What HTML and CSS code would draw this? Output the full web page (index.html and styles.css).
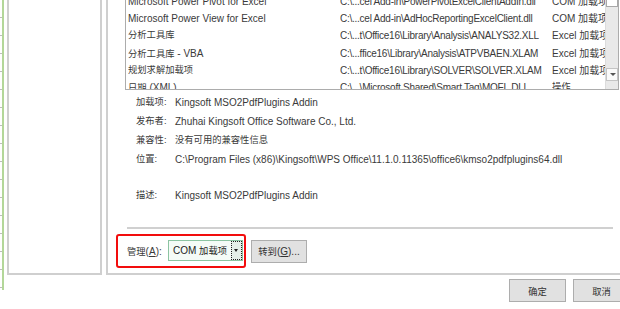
FILE: index.html
```html
<!DOCTYPE html>
<html lang="zh-CN">
<head>
    <meta charset="UTF-8">
    <title>加载项</title>
    <link rel="stylesheet" href="styles.css">
</head>
<body>
    <div class="window">
        <div class="ruler"></div>

        <div class="dialog">
            <div class="panels">
                <div class="left-panel"></div>

                <div class="main-panel">
                    <div class="list">
                        <div class="rows">
                            <div class="row"><span>Microsoft Power Pivot for Excel</span><span class="path">C:\...cel Add-in\PowerPivotExcelClientAddIn.dll</span><span>COM 加载项</span></div>
                            <div class="row"><span>Microsoft Power View for Excel</span><span class="path">C:\...cel Add-in\AdHocReportingExcelClient.dll</span><span>COM 加载项</span></div>
                            <div class="row"><span class="cjk">分析工具库</span><span class="path">C:\...t\Office16\Library\Analysis\ANALYS32.XLL</span><span>Excel 加载项</span></div>
                            <div class="row"><span><span class="cjk">分析工具库</span> - VBA</span><span class="path">C:\...ffice16\Library\Analysis\ATPVBAEN.XLAM</span><span>Excel 加载项</span></div>
                            <div class="row"><span class="cjk">规划求解加载项</span><span class="path">C:\...t\Office16\Library\SOLVER\SOLVER.XLAM</span><span>Excel 加载项</span></div>
                            <div class="row"><span><span class="cjk">日期</span> (XML)</span><span class="path">C:\...\Microsoft Shared\Smart Tag\MOFL.DLL</span><span class="cjk">操作</span></div>
                        </div>
                        <div class="scrollbar">
                            <div class="thumb"></div>
                            <div class="arrow-down"></div>
                        </div>
                    </div>

                    <div class="details">
                        <div class="detail"><span class="label cjk">加载项:</span><span>Kingsoft MSO2PdfPlugins Addin</span></div>
                        <div class="detail"><span class="label cjk">发布者:</span><span>Zhuhai Kingsoft Office Software Co., Ltd.</span></div>
                        <div class="detail"><span class="label cjk">兼容性:</span><span class="cjk">没有可用的兼容性信息</span></div>
                        <div class="detail"><span class="label cjk">位置:</span><span>C:\Program Files (x86)\Kingsoft\WPS Office\11.1.0.11365\office6\kmso2pdfplugins64.dll</span></div>
                        <div class="detail desc"><span class="label cjk">描述:</span><span>Kingsoft MSO2PdfPlugins Addin</span></div>
                    </div>

                    <div class="separator"></div>

                    <div class="manage-row">
                        <div class="highlight">
                            <span class="manage-label"><span class="cjk">管理</span>(<u>A</u>):</span>
                            <div class="combo">
                                <span class="combo-text">COM <span class="cjk">加载项</span></span>
                                <span class="combo-btn"></span>
                            </div>
                        </div>
                        <button class="btn go-btn"><span class="cjk">转到</span>(<u>G</u>)...</button>
                    </div>
                </div>
            </div>

            <div class="footer">
                <button class="btn cjk">确定</button>
                <button class="btn cjk">取消</button>
            </div>
        </div>
    </div>
</body>
</html>
```

FILE: styles.css
```css
body {
    margin: 0;
    width: 620px;
    height: 309px;
    overflow: hidden;
    background: #fff;
    font-family: "Liberation Sans", "Noto Sans CJK SC", sans-serif;
    font-size: 10px;
    color: #3a3a3a;
}

.cjk {
    font-size: 9.3px;
}

.window {
    display: flex;
    align-items: flex-start;
}

.ruler {
    width: 2px;
    height: 290px;
    border-right: 2px solid #b3d799;
    background: repeating-linear-gradient(to bottom, transparent 0 17px, #bdbdbd 17px 18px);
    flex-shrink: 0;
}

.dialog {
    margin-left: 3px;
    width: 613px;
    flex-shrink: 0;
}

.panels {
    display: flex;
    gap: 4px;
    height: 275px;
}

.left-panel {
    width: 95px;
    box-sizing: border-box;
    border: 2px solid #cfcfcf;
    border-top: none;
    flex-shrink: 0;
}

.main-panel {
    width: 540px;
    flex-shrink: 0;
    box-sizing: border-box;
    border-left: 2px solid #cfcfcf;
    border-bottom: 2px solid #cfcfcf;
    padding-left: 17px;
}

/* add-in list, top is scrolled out of view */
.list {
    display: flex;
    width: 494px;
    height: 100px;
    margin-top: -10px;
    box-sizing: border-box;
    border: 1px solid #acacac;
    overflow: hidden;
}

.rows {
    flex: 1;
    padding-top: 2px;
}

.row {
    display: grid;
    grid-template-columns: 212px 212px 1fr;
    padding-left: 2px;
    height: 17.2px;
    line-height: 17.2px;
    white-space: nowrap;
}

.row > span {
    overflow: hidden;
}

.row .path {
    letter-spacing: -0.25px;
}

.scrollbar {
    width: 12px;
    display: flex;
    flex-direction: column;
    justify-content: space-between;
    background: #e9e9e9;
    border-left: 1px solid #dcdcdc;
}

.thumb {
    height: 16px;
    background: #fff;
    border: 1px solid #a8a8a8;
    box-sizing: border-box;
}

.arrow-down {
    height: 13px;
    margin-bottom: 8px;
    background: #fafafa;
    border: 1px solid #c4c4c4;
    box-sizing: border-box;
    position: relative;
}

.arrow-down::after {
    content: "";
    position: absolute;
    left: 3px;
    top: 4px;
    border-left: 3px solid transparent;
    border-right: 3px solid transparent;
    border-top: 3px solid #555;
}

.details {
    margin-top: 3px;
    padding-left: 11px;
}

.detail {
    display: flex;
    height: 19px;
    line-height: 19px;
    white-space: nowrap;
}

.detail .label {
    width: 39px;
    flex-shrink: 0;
}

.detail.desc {
    margin-top: 17px;
}

.separator {
    margin: 22px 0 0 2px;
    width: 486px;
    border-top: 2px solid #d0d0d0;
}

.manage-row {
    display: flex;
    align-items: center;
    gap: 5px;
    margin-top: 5px;
    margin-left: -9px;
}

.highlight {
    display: flex;
    align-items: center;
    width: 130px;
    height: 34px;
    box-sizing: border-box;
    border: 2px solid #f20d0d;
    border-radius: 3px;
    padding: 0 1px 1px 9px;
}

.manage-label {
    width: 41px;
    flex-shrink: 0;
}

.combo {
    display: flex;
    width: 75px;
    height: 21px;
    box-sizing: border-box;
    border: 1px solid #8cc4a2;
    background: #f5fbf7;
}

.combo-text {
    flex: 1;
    padding-left: 4px;
    line-height: 19px;
    color: #222;
}

.combo-btn {
    width: 11px;
    box-sizing: border-box;
    border: 1px dotted #222;
    background: #e4efe8;
    position: relative;
}

.combo-btn::after {
    content: "";
    position: absolute;
    left: 2px;
    top: 7px;
    border-left: 2.5px solid transparent;
    border-right: 2.5px solid transparent;
    border-top: 3px solid #222;
}

.btn {
    font-family: inherit;
    font-size: 10px;
    color: #333;
    height: 23px;
    width: 57px;
    padding: 0;
    background: #e1e1e1;
    border: 1px solid #adadad;
    flex-shrink: 0;
}

.btn.cjk {
    font-size: 9.3px;
}

.go-btn {
    width: 56px;
}

.footer {
    display: flex;
    justify-content: flex-end;
    gap: 7px;
    margin-top: 4px;
    margin-right: -10px;
}
```
